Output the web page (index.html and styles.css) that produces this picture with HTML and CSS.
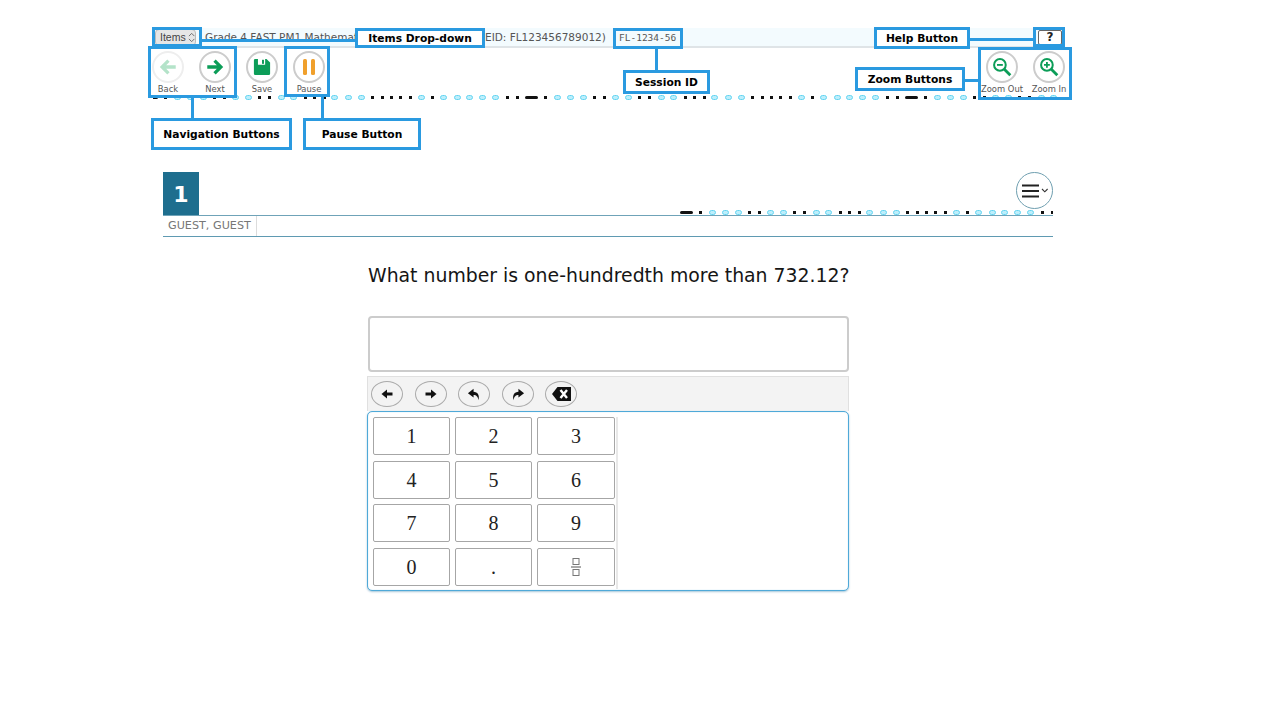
FILE: index.html
```html
<!DOCTYPE html>
<html lang="en">
<head>
<meta charset="utf-8">
<title>Test delivery tutorial</title>
<link rel="stylesheet" href="styles.css">
</head>
<body>
<svg class="defs" width="0" height="0" aria-hidden="true">
  <defs>
    <g id="dots">
      <rect x="0" y="1" width="13" height="3" rx="1.5" class="bk"/>
      <rect x="19" y="1" width="3" height="3" class="bk"/>
      <rect x="29.5" y="0.5" width="6" height="4" rx="2" class="cy"/><rect x="42.5" y="0.5" width="6" height="4" rx="2" class="cy"/><rect x="55.5" y="0.5" width="6" height="4" rx="2" class="cy"/>
      <rect x="68" y="1" width="3" height="3" class="bk"/><rect x="78" y="1" width="3" height="3" class="bk"/>
      <rect x="87.5" y="0.5" width="6" height="4" rx="2" class="cy"/><rect x="100.5" y="0.5" width="6" height="4" rx="2" class="cy"/>
      <rect x="113" y="1" width="3" height="3" class="bk"/><rect x="123" y="1" width="3" height="3" class="bk"/>
      <rect x="133.5" y="0.5" width="6" height="4" rx="2" class="cy"/><rect x="145.5" y="0.5" width="6" height="4" rx="2" class="cy"/>
      <rect x="159" y="1" width="3" height="3" class="bk"/><rect x="168" y="1" width="3" height="3" class="bk"/><rect x="178" y="1" width="3" height="3" class="bk"/>
      <rect x="186.5" y="0.5" width="6" height="4" rx="2" class="cy"/><rect x="200.5" y="0.5" width="6" height="4" rx="2" class="cy"/><rect x="213.5" y="0.5" width="6" height="4" rx="2" class="cy"/>
      <rect x="226" y="1" width="3" height="3" class="bk"/><rect x="236" y="1" width="3" height="3" class="bk"/><rect x="245" y="1" width="3" height="3" class="bk"/><rect x="254" y="1" width="3" height="3" class="bk"/><rect x="264" y="1" width="3" height="3" class="bk"/>
      <rect x="273.5" y="0.5" width="6" height="4" rx="2" class="cy"/>
      <rect x="286" y="1" width="3" height="3" class="bk"/>
      <rect x="295.5" y="0.5" width="6" height="4" rx="2" class="cy"/><rect x="309.5" y="0.5" width="6" height="4" rx="2" class="cy"/><rect x="321.5" y="0.5" width="6" height="4" rx="2" class="cy"/><rect x="334.5" y="0.5" width="6" height="4" rx="2" class="cy"/><rect x="347.5" y="0.5" width="6" height="4" rx="2" class="cy"/>
      <rect x="361" y="1" width="3" height="3" class="bk"/><rect x="371" y="1" width="3" height="3" class="bk"/>
    </g>
    <pattern id="dotsTop" patternUnits="userSpaceOnUse" x="-8" y="0" width="380" height="5"><use href="#dots"/></pattern>
    <pattern id="dotsQuestion" patternUnits="userSpaceOnUse" x="0" y="0" width="380" height="5"><use href="#dots"/></pattern>
  </defs>
</svg>

<div class="shell">
  <header class="topbar">
    <button class="items-btn">Items
      <svg width="8" height="11" viewBox="0 0 8 11"><path d="M1 4 4 1l3 3M1 7l3 3 3-3" fill="none" stroke="#666" stroke-width="1"/></svg>
    </button>
    <span class="title">Grade 4 FAST PM1 Mathematics</span>
    <span class="eid">EID: FL123456789012)</span>
    <span class="session">FL-1234-56</span>
    <button class="help-btn">?</button>
  </header>

  <div class="toolbar">
    <div class="tool-group">
      <div class="tool tool-faded">
        <span class="circle">
          <svg width="20" height="20" viewBox="0 0 22 22"><path d="M19.500 11H5M11.500 4 4.500 11l7 7" fill="none" stroke="#b4e3c9" stroke-width="3.600"/></svg>
        </span>
        <span class="tool-label">Back</span>
      </div>
      <div class="tool">
        <span class="circle">
          <svg width="20" height="20" viewBox="0 0 22 22"><path d="M2.500 11H17M10.500 4l7 7-7 7" fill="none" stroke="#0c9d58" stroke-width="3.600"/></svg>
        </span>
        <span class="tool-label">Next</span>
      </div>
      <div class="tool">
        <span class="circle">
          <svg width="18" height="18" viewBox="0 0 20 20"><path d="M2.500 1h12.500l4 4v12.500a1.500 1.500 0 0 1-1.500 1.500h-15a1.500 1.500 0 0 1-1.500-1.500v-15a1.500 1.500 0 0 1 1.500-1.500z" fill="#0c9d58"/><rect x="5.500" y="1" width="8" height="6.500" fill="#fff"/><rect x="10" y="2" width="2.200" height="4.500" fill="#0c9d58"/></svg>
        </span>
        <span class="tool-label">Save</span>
      </div>
      <div class="tool">
        <span class="circle">
          <svg width="20" height="20" viewBox="0 0 20 20"><rect x="4" y="2" width="4" height="16" rx="1.500" fill="#f0a02c"/><rect x="12" y="2" width="4" height="16" rx="1.500" fill="#f0a02c"/></svg>
        </span>
        <span class="tool-label">Pause</span>
      </div>
    </div>
    <div class="tool-group">
      <div class="tool">
        <span class="circle">
          <svg width="20" height="20" viewBox="0 0 24 24"><circle cx="9.500" cy="9.500" r="7" fill="none" stroke="#0c9d58" stroke-width="2.400"/><path d="M14.500 14.500 22 22" stroke="#0c9d58" stroke-width="3.400"/><path d="M6 9.500h7" stroke="#0c9d58" stroke-width="2.200"/></svg>
        </span>
        <span class="tool-label">Zoom Out</span>
      </div>
      <div class="tool">
        <span class="circle">
          <svg width="20" height="20" viewBox="0 0 24 24"><circle cx="9.500" cy="9.500" r="7" fill="none" stroke="#0c9d58" stroke-width="2.400"/><path d="M14.500 14.500 22 22" stroke="#0c9d58" stroke-width="3.400"/><path d="M6 9.500h7M9.500 6v7" stroke="#0c9d58" stroke-width="2.200"/></svg>
        </span>
        <span class="tool-label">Zoom In</span>
      </div>
    </div>
  </div>

  <svg class="strip-top" width="910" height="5"><rect width="910" height="5" fill="url(#dotsTop)"/></svg>

  <main class="question">
    <div class="q-head">
      <div class="q-number">1</div>
      <div class="q-tools">
        <button class="menu-btn">
          <svg width="26" height="16" viewBox="0 0 26 16"><path d="M0 2.500h17M0 8h17M0 13.500h17" stroke="#222" stroke-width="1.900"/><path d="M20 6l2.800 2.800L25.600 6" fill="none" stroke="#333" stroke-width="1.100"/></svg>
        </button>
        <svg class="strip-q" width="373" height="5"><rect width="373" height="5" fill="url(#dotsQuestion)"/></svg>
      </div>
    </div>
    <div class="q-student"><span class="student-name">GUEST, GUEST</span></div>

    <div class="q-body">
      <p class="prompt">What number is one-hundredth more than 732.12?</p>
      <div class="answer"></div>
      <div class="eq-tools">
        <button class="eq-btn"><svg width="12" height="10" viewBox="0 0 12 10"><path d="M11.500 5H5" stroke="#111" stroke-width="3"/><path d="M6 .5 .5 5 6 9.500z" fill="#111"/></svg></button>
        <button class="eq-btn"><svg width="12" height="10" viewBox="0 0 12 10"><path d="M.5 5H7" stroke="#111" stroke-width="3"/><path d="M6 .5 11.500 5 6 9.500z" fill="#111"/></svg></button>
        <button class="eq-btn"><svg width="14" height="13" viewBox="0 0 16 15"><path d="M7.500 1 1 6l6.500 5V8c3 0 4.800 1.500 5.800 6 1.300-6.500-1.200-9.500-5.800-9.800z" fill="#111"/></svg></button>
        <button class="eq-btn"><svg width="14" height="13" viewBox="0 0 16 15"><path d="M8.500 1 15 6l-6.500 5V8c-3 0-4.800 1.500-5.800 6C1.400 7.500 3.900 4.500 8.500 4.200z" fill="#111"/></svg></button>
        <button class="eq-btn"><svg width="19" height="14" viewBox="0 0 19 14"><path d="M5.500 0H19V14H5.500L0 7z" fill="#111"/><path d="M8.500 3l6.500 8M15 3l-6.500 8" stroke="#fff" stroke-width="2.400"/></svg></button>
      </div>
      <div class="keypad">
        <div class="keys">
          <button class="key">1</button><button class="key">2</button><button class="key">3</button>
          <button class="key">4</button><button class="key">5</button><button class="key">6</button>
          <button class="key">7</button><button class="key">8</button><button class="key">9</button>
          <button class="key">0</button><button class="key">.</button>
          <button class="key"><svg width="10" height="20" viewBox="0 0 10 20"><rect x="2" y="1.500" width="6" height="6" fill="none" stroke="#777"/><path d="M0 10h10" stroke="#555" stroke-width="1"/><rect x="2" y="12.500" width="6" height="6" fill="none" stroke="#777"/></svg></button>
        </div>
      </div>
    </div>
  </main>
</div>

<div class="mark mark-items"></div>
<div class="mark mark-nav"></div>
<div class="mark mark-pause"></div>
<div class="mark mark-session"></div>
<div class="mark mark-help"></div>
<div class="mark mark-zoom"></div>
<div class="wire wire-items"></div>
<div class="wire wire-nav"></div>
<div class="wire wire-pause"></div>
<div class="wire wire-session"></div>
<div class="wire wire-help"></div>
<div class="wire wire-zoom"></div>
<div class="callout call-items">Items Drop-down</div>
<div class="callout call-nav">Navigation Buttons</div>
<div class="callout call-pause">Pause Button</div>
<div class="callout call-session">Session ID</div>
<div class="callout call-help">Help Button</div>
<div class="callout call-zoom">Zoom Buttons</div>
</body>
</html>
```
FILE: styles.css
```css
* { box-sizing: border-box; }
html, body { margin: 0; height: 100%; background: #fff; overflow: hidden; }
body { font-family: "DejaVu Sans", Verdana, sans-serif; color: #222; position: relative; }
button { font: inherit; padding: 0; margin: 0; background: none; cursor: pointer; }
.defs { position: absolute; }
.bk { fill: #111; }
.cy { fill: #bdeefb; stroke: #62d4f1; stroke-width: 1; }

.shell { width: 913px; margin-left: 152px; padding-top: 28px; }

.topbar { display: flex; align-items: center; height: 20px; background: #f3fbfe; border-bottom: 2px solid #dfe4e7; margin: 0 1px; padding-left: 2px; }
.items-btn { display: flex; align-items: center; gap: 2px; width: 41px; height: 17px; padding-left: 4px; font-family: "Liberation Sans", Arial, sans-serif; font-size: 10.500px; color: #444; background: #e6e6e6; border: 1px solid #bbb; border-radius: 4px; }
.title { margin-left: 9px; width: 150px; font-size: 10.500px; color: #555; white-space: nowrap; overflow: hidden; }
.eid { margin-left: 130px; width: 134px; font-size: 10.500px; color: #555; white-space: nowrap; }
.session { font-family: "DejaVu Sans Mono", monospace; font-size: 9.500px; color: #555; }
.help-btn { margin-left: auto; margin-right: 2px; width: 24px; height: 15px; line-height: 13px; font-size: 12px; font-weight: 700; color: #222; background: #fff; border: 1px solid #666; border-radius: 2px; }

.toolbar { display: flex; justify-content: space-between; height: 47px; padding-top: 3px; }
.tool-group { display: flex; gap: 15px; }
.tool { display: flex; flex-direction: column; align-items: center; width: 32px; }
.tool-faded .circle { border-color: #eee; }
.circle { display: flex; align-items: center; justify-content: center; width: 32px; height: 32px; border: 2px solid #ccc; border-radius: 50%; background: #fff; flex: none; }
.tool-label { margin-top: 1px; font-size: 8.400px; line-height: 10px; color: #555; white-space: nowrap; }

.strip-top { display: block; margin-left: 1px; }

.question { width: 890px; margin: 72px 0 0 11px; }
.q-head { display: flex; justify-content: space-between; height: 44px; border-bottom: 1px solid #6fa3b8; }
.q-number { width: 36px; height: 43px; padding-top: 1px; display: flex; align-items: center; justify-content: center; background: #1e6e8e; color: #fff; font-size: 22px; font-weight: 700; }
.q-tools { display: flex; flex-direction: column; align-items: flex-end; }
.menu-btn { display: flex; align-items: center; justify-content: center; width: 37px; height: 37px; border: 1px solid #6f9fb0; border-radius: 50%; background: #fff; }
.strip-q { display: block; margin-top: 1px; }
.q-student { height: 21px; border-bottom: 1px solid #5f9ab2; }
.student-name { display: inline-block; vertical-align: top; height: 20px; padding: 0 5px; line-height: 19px; font-size: 11.200px; color: #777; border-right: 1px solid #dcdcdc; }

.q-body { width: 482px; margin-left: 204px; }
.prompt { margin: 28px 0 0 1px; font-size: 18.850px; line-height: 22px; color: #151515; white-space: nowrap; }
.answer { height: 56px; margin: 29px 0 0 1px; border: 2px solid #ccc; border-radius: 4px; background: #fff; }
.eq-tools { display: flex; align-items: center; gap: 11.500px; height: 35px; margin-top: 4px; padding-left: 3px; background: #f3f3f3; border: 1px solid #e0e0e0; border-bottom: 0; }
.eq-btn { display: flex; align-items: center; justify-content: center; width: 32px; height: 26px; background: #f3f3f3; border: 1px solid #aaa; border-radius: 50%; }
.keypad { height: 180px; border: 1px solid #4fa9d8; border-radius: 5px; box-shadow: 0 1px 2px rgba(60, 130, 170, .45), inset 0 0 1px rgba(80, 170, 220, .6); padding: 5px 0 3px 5px; background: #fff; }
.keys { display: grid; grid-template-columns: 77px 77px 78px; grid-auto-rows: 38px; row-gap: 5.500px; column-gap: 5px; width: 245px; height: 172px; padding-right: 3px; border-right: 2px solid #e8e8e8; }
.key { display: flex; align-items: center; justify-content: center; padding-top: 1px; font-family: "Liberation Serif", "Times New Roman", serif; font-size: 20px; color: #222; background: #fff; border: 1px solid #a6a6a6; border-radius: 2px; }

/* Tutorial annotations laid over the screenshot */
.mark { position: absolute; border: 3px solid #2a9ae0; }
.mark-items { left: 152px; top: 27px; width: 50px; height: 20px; }
.mark-nav { left: 148px; top: 46px; width: 89px; height: 52px; }
.mark-pause { left: 284px; top: 46px; width: 46px; height: 51px; }
.mark-session { left: 613px; top: 28px; width: 70px; height: 21px; }
.mark-help { left: 1033px; top: 27px; width: 32px; height: 20px; }
.mark-zoom { left: 978px; top: 47px; width: 94px; height: 53px; }
.wire { position: absolute; background: #2a9ae0; }
.wire-items { left: 202px; top: 39px; width: 153px; height: 3px; }
.wire-nav { left: 191px; top: 98px; width: 3px; height: 20px; }
.wire-pause { left: 321px; top: 97px; width: 3px; height: 21px; }
.wire-session { left: 655px; top: 49px; width: 3px; height: 21px; }
.wire-help { left: 970px; top: 38px; width: 63px; height: 3px; }
.wire-zoom { left: 965px; top: 79px; width: 13px; height: 3px; }
.callout { position: absolute; display: flex; align-items: center; justify-content: center; background: #fff; border: 3px solid #2a9ae0; font-size: 10.700px; font-weight: 700; color: #000; white-space: nowrap; }
.call-items { left: 355px; top: 28px; width: 130px; height: 20px; }
.call-nav { left: 151px; top: 118px; width: 141px; height: 32px; }
.call-pause { left: 303px; top: 118px; width: 118px; height: 32px; }
.call-session { left: 623px; top: 70px; width: 87px; height: 24px; }
.call-help { left: 874px; top: 27px; width: 96px; height: 22px; }
.call-zoom { left: 855px; top: 67px; width: 110px; height: 24px; }
```
